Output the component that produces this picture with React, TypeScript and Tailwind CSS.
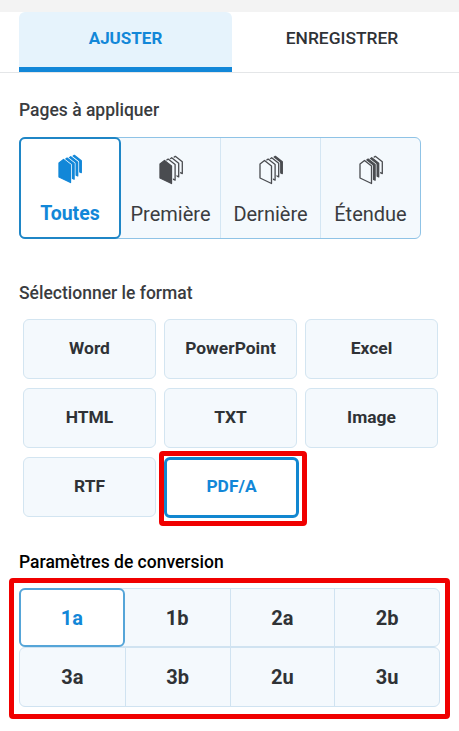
import type { ReactNode } from "react";

const pageOptions = [
  { label: "Toutes", solid: [0, 1, 2, 3], color: "#1287d8" },
  { label: "Première", solid: [0], color: "#4a4c50" },
  { label: "Dernière", solid: [3], color: "#4a4c50" },
  { label: "Étendue", solid: [1, 2], color: "#4a4c50" },
];

const formats = ["Word", "PowerPoint", "Excel", "HTML", "TXT", "Image", "RTF"];
const levels = [
  ["1a", "1b", "2a", "2b"],
  ["3a", "3b", "2u", "3u"],
];

// sheets are painted back to front, index 0 is the front one, back ones get shorter
function PagesIcon({ solid, color, bg }: { solid: number[]; color: string; bg: string }) {
  const sheets = [3, 2, 1, 0];
  return (
    <svg width="26" height="30" viewBox="0 0 26 30" className="block">
      {sheets.map((i) => {
        const x = 2 + i * 3.6;
        const peak = 5.5 - i * 1.4;
        const bottom = 28.5 - i * 3.3;
        const d = `M${x} ${peak + 3.5}L${x + 4.5} ${peak}L${x + 11.5} ${peak + 5.5}V${bottom}L${x} ${bottom - 5.5}Z`;
        return (
          <g key={i}>
            <path d={d} fill={bg} stroke={bg} strokeWidth="2.8" strokeLinejoin="round" />
            <path
              d={d}
              fill={solid.includes(i) ? color : bg}
              stroke={color}
              strokeWidth="1.3"
              strokeLinejoin="round"
            />
          </g>
        );
      })}
    </svg>
  );
}

function Label({ children, className = "" }: { children: ReactNode; className?: string }) {
  return <h2 className={`text-[17.5px] leading-[20px] font-medium ${className}`}>{children}</h2>;
}

export default function App() {
  return (
    <div className="h-[731px] w-[459px] overflow-hidden bg-white font-['Roboto',sans-serif] text-[#2f3236]">
      <div className="h-3 bg-[#f3f3f3]" />

      <div className="flex h-[61px] border-b border-[#e4e6e8] pl-[19px]">
        <button className="h-[60px] w-[213px] rounded-t-md border-b-[5px] border-[#1287d8] bg-[#e6f3fc] pb-[2px] text-[17px] font-bold text-[#1287d8]">
          AJUSTER
        </button>
        <button className="h-[60px] w-[220px] pb-[7px] text-[17.4px] font-medium text-[#2f3236]">ENREGISTRER</button>
      </div>

      <div className="px-[19px] pt-[27px]">
        <Label className="text-[#3a3c40]">Pages à appliquer</Label>
        <div className="mt-[17px] flex h-[102px] w-[402px] rounded-md border border-[#8fc3e6] bg-[#f4f9fd]">
          {pageOptions.map((opt, i) => (
            <div
              key={opt.label}
              className={
                i === 0
                  ? "-my-px -ml-px mr-[-2px] flex h-[102px] w-[102px] shrink-0 flex-col items-center rounded-md border-2 border-[#1f86c6] bg-white pt-[15px]"
                  : `flex flex-1 flex-col items-center pt-[17px] ${i > 1 ? "border-l border-[#d4e6f3]" : "pl-[2px]"}`
              }
            >
              <PagesIcon solid={opt.solid} color={opt.color} bg={i === 0 ? "#ffffff" : "#f4f9fd"} />
              <span
                className={
                  i === 0
                    ? "mt-[18px] text-[19.5px] leading-[24px] font-bold text-[#1287d8]"
                    : "mt-[17px] text-[20px] leading-[24px] text-[#3a3c40]"
                }
              >
                {opt.label}
              </span>
            </div>
          ))}
        </div>

        <Label className="mt-[44px] text-[#3a3c40]">Sélectionner le format</Label>
        <div className="mt-4 grid w-[419px] grid-cols-3 gap-x-2 gap-y-[9px] pl-1">
          {formats.map((f) => (
            <div
              key={f}
              className="flex h-[60px] items-center justify-center rounded-md border border-[#d3e5f1] bg-[#f4f9fd] pb-[2px] text-[17.4px] font-bold text-[#2f3236]"
            >
              {f}
            </div>
          ))}
          <div className="relative flex h-[61px] w-[135px] items-center justify-center rounded-md border-[3px] border-[#1287d0] bg-white pb-[2px] text-[17.4px] font-bold text-[#1287d8]">
            PDF/A
            <div className="absolute -top-[9px] -right-[11px] -bottom-[11px] -left-[8px] rounded-sm border-[5px] border-[#f00000]" />
          </div>
        </div>

        <Label className="mt-[34px] text-black">Paramètres de conversion</Label>
        <div className="relative mt-4 w-[421px]">
          {levels.map((row, r) => (
            <div
              key={r}
              className={`grid grid-cols-4 rounded-md border border-[#d0e3f1] bg-[#f4f9fd] ${r === 0 ? "h-[59px]" : "h-[60px]"}`}
            >
              {row.map((lvl, c) => {
                const active = lvl === "1a";
                return (
                  <div
                    key={lvl}
                    className={
                      active
                        ? "-my-px -ml-px flex h-[59px] items-center justify-center rounded-md border-2 border-[#55a5d8] bg-white text-[20px] font-bold text-[#1287d8]"
                        : `flex items-center justify-center text-[20px] font-bold text-[#2f3236] ${c > 0 && row[c - 1] !== "1a" ? "border-l border-[#d0e3f1]" : ""}`
                    }
                  >
                    {lvl}
                  </div>
                );
              })}
            </div>
          ))}
          <div className="absolute -top-[10px] -right-[10px] -bottom-[12px] -left-[10px] rounded-sm border-[5px] border-[#f00000]" />
        </div>
      </div>
    </div>
  );
}
